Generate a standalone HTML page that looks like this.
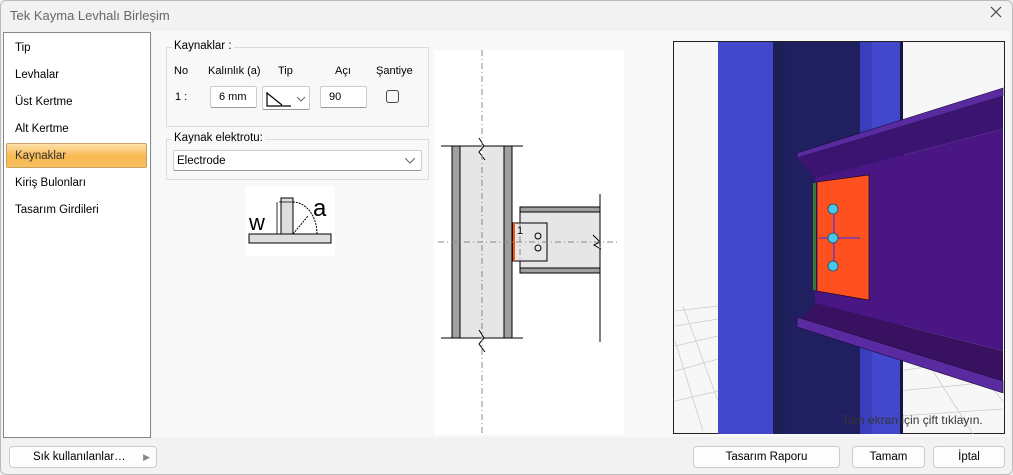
<!DOCTYPE html>
<html><head><meta charset="utf-8"><style>
*{box-sizing:border-box;margin:0;padding:0}
body{width:1013px;height:475px;background:#f2f2f2;font-family:"Liberation Sans",sans-serif;font-size:12px;color:#000;position:relative;overflow:hidden}
.a{position:absolute}
.win{left:0;top:0;width:1013px;height:475px;border:1px solid #bbb;border-radius:6px}
.title{left:10px;top:8px;font-size:13px;color:#666}
.close{left:990px;top:6px;font-size:14px;color:#555;font-weight:normal}
.list{left:3px;top:32px;width:148px;height:406px;background:#fff;border:1px solid #888}
.item{position:absolute;left:11px;font-size:11.5px}
.sel{left:2px;top:110px;width:141px;height:25px;border:1px solid #c9a060;border-radius:2px;background:linear-gradient(#fde0a8,#f8b850 55%,#f7c060);}
.content{left:152px;top:31px;width:858px;height:406px;background:#f8f8f8}
.grp{border:1px solid #dcdcdc}
.lg{background:#f8f8f8;padding:0 2px;font-size:11.5px}
.inp{background:#fff;border:1px solid #ccc;border-bottom:1px solid #999;border-radius:2px;font-size:11px;padding:4px 0 0 8px}
.btn{background:#fdfdfd;border:1px solid #ccc;border-radius:4px;font-size:11.5px;text-align:center;line-height:20px}
</style></head><body>
<div class="a win"></div>
<div class="a title">Tek Kayma Levhalı Birleşim</div>
<svg class="a close" width="12" height="12"><path d="M1 1L11 11M11 1L1 11" stroke="#444" stroke-width="1.2"/></svg>
<div class="a list">
<div class="a sel"></div>
<div class="item" style="top:9px">Tip</div>
<div class="item" style="top:36px">Levhalar</div>
<div class="item" style="top:63px">Üst Kertme</div>
<div class="item" style="top:90px">Alt Kertme</div>
<div class="item" style="top:117px;color:#333">Kaynaklar</div>
<div class="item" style="top:144px">Kiriş Bulonları</div>
<div class="item" style="top:171px">Tasarım Girdileri</div>
</div>
<div class="a content"></div>
<div class="a grp" style="left:166px;top:47px;width:263px;height:80px"></div>
<div class="a lg" style="left:172px;top:40px">Kaynaklar :</div>
<div class="a" style="left:174px;top:65px;font-size:11px">No</div>
<div class="a" style="left:208px;top:65px;font-size:11px">Kalınlık (a)</div>
<div class="a" style="left:278px;top:65px;font-size:11px">Tip</div>
<div class="a" style="left:335px;top:65px;font-size:11px">Açı</div>
<div class="a" style="left:376px;top:65px;font-size:11px">Şantiye</div>
<div class="a" style="left:175px;top:91px;font-size:11px">1 :</div>
<div class="a inp" style="left:210px;top:86px;width:47px;height:22px">6 mm</div>
<div class="a inp" style="left:262px;top:86px;width:48px;height:24px;padding:0">
<svg width="48" height="24"><path d="M4 5V19H28M4 6L19 18" stroke="#000" fill="none" stroke-width="1.2"/><path d="M34 10l4 4 4-4" stroke="#666" fill="none"/></svg></div>
<div class="a inp" style="left:320px;top:86px;width:47px;height:22px">90</div>
<div class="a" style="left:386px;top:90px;width:13px;height:13px;border:1px solid #444;border-radius:3px;background:#f8f8f8"></div>
<div class="a grp" style="left:166px;top:139px;width:263px;height:41px"></div>
<div class="a lg" style="left:172px;top:132px">Kaynak elektrotu:</div>
<div class="a inp" style="left:173px;top:150px;width:249px;height:21px;font-size:11.5px;padding:4px 0 0 3px">Electrode<svg class="a" style="right:6px;top:7px" width="10" height="6"><path d="M0 0l5 5 5-5" stroke="#666" fill="none"/></svg></div>
<svg class="a" style="left:245px;top:186px" width="90" height="70"><rect width="90" height="70" fill="#fff"/>
<rect x="36" y="12" width="12" height="36" fill="#ddd" stroke="#000"/><rect x="4" y="48" width="82" height="9" fill="#ddd" stroke="#000"/>
<path d="M48 16 A24 32 0 0 1 72 48" stroke="#000" fill="none" stroke-dasharray="2 1"/><path d="M48 48L63 30" stroke="#000" stroke-dasharray="2 1"/><path d="M34 16H48M32 16V48" stroke="#000" stroke-width=".8"/>
<text x="4" y="44" font-size="22" font-family="Liberation Sans">w</text><text x="68" y="30" font-size="24" font-family="Liberation Sans">a</text></svg>
<svg class="a" style="left:434px;top:50px" width="190" height="385"><rect width="190" height="385" fill="#fff"/>
<g stroke="#000" stroke-width="1">
<rect x="18" y="96" width="8" height="192" fill="#a0a0a0"/><rect x="26" y="96" width="44" height="192" fill="#e6e6e6"/><rect x="70" y="96" width="8" height="192" fill="#a0a0a0"/>
<rect x="86" y="157" width="80" height="66" fill="#e6e6e6"/><rect x="86" y="157" width="80" height="5" fill="#a0a0a0"/><rect x="86" y="218" width="80" height="5" fill="#a0a0a0"/>
<rect x="79" y="173" width="34" height="38" fill="#e6e6e6"/>
<path d="M7 96H89M7 288H89M166 144V292" fill="none"/>
<circle cx="104" cy="186" r="3" fill="none"/><circle cx="104" cy="198" r="3" fill="none"/></g>
<path d="M45 88l5 8-5 6 6 8M45 280l5 8-5 6 6 8" stroke="#000" fill="#fff"/>
<path d="M159 185l7 7-6 3 7 4" stroke="#000" fill="#fff"/>
<path d="M48 0V385M4 192H185M86 173V211" stroke="#888" stroke-dasharray="6 3 1 3" fill="none"/>
<rect x="79" y="173" width="2" height="38" fill="#ff5010"/>
<text x="83" y="184" font-size="11" font-family="Liberation Sans">1</text></svg>
<svg class="a" style="left:673px;top:41px" width="332" height="393">
<rect width="332" height="393" fill="#f7f7f7" stroke="#222" stroke-width="2"/>
<g stroke="#ccc" stroke-width=".8" fill="none"><path d="M2 270L45 265M2 285L45 278M2 305L45 295M2 330L45 318M2 360L45 350M10 265L45 360M2 300L30 390M225 330L330 315M225 350L330 340M225 375L330 368M260 330L300 393M300 325L330 360"/></g>
<rect x="45" y="1" width="55" height="392" fill="#4347cc"/>
<rect x="100" y="1" width="12" height="392" fill="#1e1e58"/>
<rect x="112" y="1" width="75" height="392" fill="#202060"/>
<rect x="187" y="1" width="40" height="392" fill="#4347cc"/>
<rect x="187" y="1" width="12" height="392" fill="#3a3ebb"/>
<rect x="227" y="1" width="3" height="392" fill="#151540"/>
<path d="M124 112L330 47V55L124 117Z" fill="#5a2aa0" stroke="#1a0a3a" stroke-width=".6"/>
<path d="M124 117L330 55V88L142 137Z" fill="#3a1470"/>
<path d="M142 137L330 88V310L142 262Z" fill="#4a1684"/>
<path d="M142 262L330 310V350L124 283Z" fill="#381260"/>
<path d="M124 276L330 340V352L124 286Z" fill="#5a2aa0" stroke="#1a0a3a" stroke-width=".6"/>
<path d="M144 141L196 134V259L144 250Z" fill="#ff5020" stroke="#000" stroke-width=".6"/>
<rect x="140" y="142" width="3" height="107" fill="#3a7a30"/>
<path d="M161 168V227M146 197H187" stroke="#3030ff" stroke-width="1"/>
<g fill="#48c8e8" stroke="#1a4a6a" stroke-width=".8"><circle cx="160" cy="168" r="5"/><circle cx="160" cy="197" r="5"/><circle cx="160" cy="225" r="5"/></g>
<text x="169" y="383" font-size="12" font-family="Liberation Sans" fill="#333">Tam ekran için çift tıklayın.</text>
</svg>
<div class="a btn" style="left:9px;top:446px;width:148px;height:22px;text-align:left;padding-left:23px">Sık kullanılanlar…<span style="position:absolute;right:6px;top:0;color:#888;font-size:9px">▶</span></div>
<div class="a btn" style="left:693px;top:446px;width:147px;height:22px">Tasarım Raporu</div>
<div class="a btn" style="left:852px;top:446px;width:73px;height:22px">Tamam</div>
<div class="a btn" style="left:933px;top:446px;width:72px;height:22px">İptal</div>
</body></html>
